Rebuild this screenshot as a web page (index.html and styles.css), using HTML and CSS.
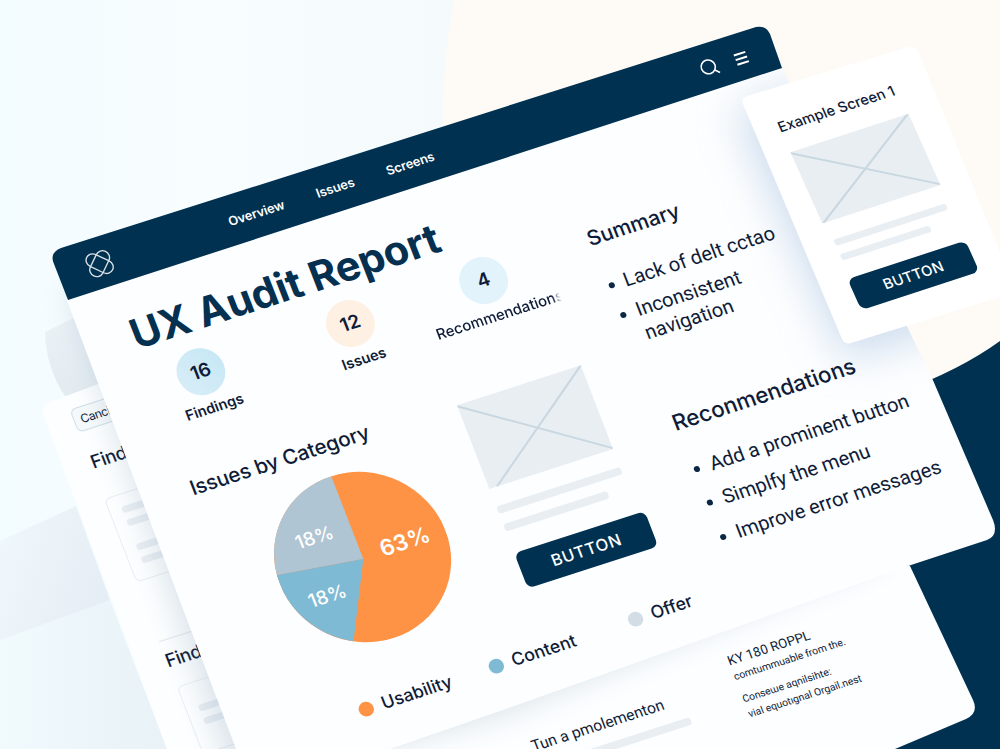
FILE: index.html
```html
<!DOCTYPE html>
<html lang="en">
<head>
  <meta charset="UTF-8" />
  <title>UX Audit Report</title>
  <link rel="stylesheet" href="styles.css">
</head>
<body>
  <div class="stage">

    <!-- backdrop and back sheet -->
    <svg class="layer" viewBox="0 0 1000 749">
      <defs>
        <linearGradient id="sky" x1="0" y1="0" x2="1" y2="0">
          <stop offset="0" stop-color="#f3fcff" />
          <stop offset=".2" stop-color="#f8fdff" />
          <stop offset=".5" stop-color="#f4f9fc" />
        </linearGradient>
        <linearGradient id="shade" x1="0" y1="0" x2="1" y2="0.4">
          <stop offset="0" stop-color="#eff8fb" />
          <stop offset="1" stop-color="#e6eef5" />
        </linearGradient>
        <linearGradient id="shade2" x1="0" y1="0" x2="1" y2="0">
          <stop offset="0" stop-color="#f1fafd" />
          <stop offset="1" stop-color="#e8f2f7" />
        </linearGradient>
        <linearGradient id="disc" x1="0" y1="0" x2="0" y2="1">
          <stop offset="0" stop-color="#edf3f7" />
          <stop offset="1" stop-color="#e2ebf0" />
        </linearGradient>
        <filter id="soft" x="-20%" y="-20%" width="140%" height="140%">
          <feGaussianBlur stdDeviation="14" />
        </filter>
        <filter id="wide" x="-30%" y="-30%" width="160%" height="160%">
          <feGaussianBlur stdDeviation="22" />
        </filter>
        <clipPath id="panel">
          <path d="M66 298 L781 66 L932 378 L993 520 L987 540 L908 566 L500 711 L236 749 Z" />
        </clipPath>
      </defs>
      <rect width="1000" height="749" fill="url(#sky)" />
      <path d="M454 0 Q441 70 443 130 L900 420 L1000 400 V0 Z" fill="#fefaf5" />
      <path d="M45 332 L90 310 L120 385 L65 396 Q46 368 45 332 Z" fill="url(#disc)" />
      <path d="M0 541 L76 506 L110 600 L0 648 Z" fill="url(#shade)" />
      <path d="M0 640 L110 600 L167 749 H0 Z" fill="url(#shade2)" />
      <path d="M900 392 Q960 370 1000 341 V749 H850 Z" fill="#003150" />
      <path d="M53 401 L400 270 L910 566 L973 700 Q979 713 966 719 L895 749 H167 L43 414 Q40 406 53 401 Z" fill="#fcfeff" />
    </svg>

    <div class="sheet back">
      <div class="chip">Canci</div>
      <h3>Find</h3>
      <div class="box">
        <i></i><i></i><i class="apart"></i><i></i>
      </div>
      <hr>
      <h3>Find</h3>
      <div class="box short"><i></i><i></i></div>
    </div>

    <div class="sheet footnotes">
      <div class="promo">
        <p>Tun a pmolementon</p>
        <i></i>
      </div>
      <div class="notes">
        <h4>KY 180 ROPPL</h4>
        <p>comtummuable from the.</p>
        <p class="next">Conseɯe aqnilsihte:</p>
        <p>vial equotıgnal Orgail.nest</p>
      </div>
    </div>

    <!-- report sheet, with the shadow of the example card on it -->
    <svg class="layer" viewBox="0 0 1000 749">
      <path d="M66 290 L760 62 L880 560 L500 716 L236 790 Z" fill="#5b7f9c" opacity=".2" filter="url(#soft)" />
      <path d="M66 298 L781 66 L932 378 L993 520 Q999 535 987 540 L908 566 L500 711 L390 749 H236 L192 633 Z" fill="#fdfeff" />
      <g clip-path="url(#panel)">
        <path d="M735 110 L900 60 L1000 310 L845 360 Z" fill="#9dbbdc" opacity=".5" filter="url(#wide)" />
      </g>
      <path d="M68 300 L54 264 Q49 253 61 248 L756 27 Q766 25 770 34 L782 68 Z" fill="#003150" />
    </svg>

    <div class="sheet report">
      <header>
        <svg class="logo" viewBox="-14 -14 28 28">
          <rect x="-14.5" y="-7" width="29" height="14" rx="7" transform="rotate(45)" />
          <rect x="-14.5" y="-7" width="29" height="14" rx="7" transform="rotate(-45)" />
        </svg>
        <nav>
          <a>Overview</a>
          <a>Issues</a>
          <a>Screens</a>
        </nav>
        <svg class="search" viewBox="0 0 20 20"><circle cx="9" cy="9" r="7" /><path d="M14 14 L18 18" /></svg>
        <svg class="menu" viewBox="0 0 14 14"><path d="M1 2 H13 M1 7 H13 M1 12 H13" /></svg>
      </header>

      <div class="content">
        <main>
          <h1>UX Audit Report</h1>
          <div class="stats">
            <div class="stat"><b>16</b><span>Findings</span></div>
            <div class="stat warm"><b>12</b><span>Issues</span></div>
            <div class="stat pale"><b>4</b><span>Recommendations</span></div>
          </div>

          <div class="row">
            <section class="category">
              <h2>Issues by Category</h2>
              <svg class="pie" viewBox="-87 -87 174 174">
                <circle r="87" fill="#ff9345" />
                <path d="M0 2 L0 -87 A87 87 0 0 0 -86.5 -9 Z" fill="#afc5d3" />
                <path d="M0 2 L-86.5 -9 A87 87 0 0 0 -38.9 77.8 Z" fill="#7fbad5" />
                <text class="large" x="45" y="6">63%</text>
                <text x="-38" y="-27">18%</text>
                <text x="-47" y="33">18%</text>
              </svg>
            </section>
            <section class="wireframe">
              <svg class="image" viewBox="0 0 130 90"><path d="M0 1 L130 89 M130 0 L8 90" /></svg>
              <i></i>
              <i class="short"></i>
              <button>BUTTON</button>
            </section>
          </div>

          <div class="legend">
            <span class="usability">Usability</span>
            <span class="issue-content">Content</span>
            <span class="offer">Offer</span>
          </div>
        </main>

        <aside>
          <h2>Summary</h2>
          <ul>
            <li>Lack of delt cctao</li>
            <li>Inconsistent<br>navigation</li>
          </ul>
          <div class="recommendations">
            <h2>Reconmendations</h2>
            <ul>
              <li>Add a prominent button</li>
              <li>Simplfy the menu</li>
              <li>Improve error messages</li>
            </ul>
          </div>
        </aside>
      </div>
    </div>

    <!-- example card -->
    <svg class="layer" viewBox="0 0 1000 749">
      <path d="M747 96 L908 47 Q916 45 919 53 L1016 292 L851 343 Q845 345 842 339 L743 104 Q741 98 747 96 Z" fill="#fff" />
    </svg>
    <div class="sheet example">
      <h3>Example Screen 1</h3>
      <div class="wireframe">
        <svg class="image" viewBox="0 0 124 78"><path d="M0 1 L124 77 M123 0 L1 78" /></svg>
        <i></i>
        <i class="short"></i>
        <button>BUTTON</button>
      </div>
    </div>

  </div>
</body>
</html>
```
FILE: styles.css
```css
* { box-sizing: border-box; }
body { margin: 0; font-family: Inter, "Liberation Sans", sans-serif; color: #0f1c38; }
h1, h2, h3, h4, p, ul { margin: 0; padding: 0; }
i { display: block; background: #e9eef3; border-radius: 3px; }

.stage { position: relative; width: 1000px; height: 749px; overflow: hidden; }
.layer { position: absolute; left: 0; top: 0; width: 1000px; height: 749px; }

/* every sheet is flat inside and tilted as a whole */
.sheet {
  position: absolute;
  transform-origin: 0 0;
  transform: matrix(.952, -.307, .36, .93, 0, 0);
}

/* back sheet */
.back { left: 42px; top: 408px; width: 200px; padding: 10px 0 0 25px; }
.chip {
  height: 25px;
  padding-left: 6px;
  border: 1px solid #cfdfe8;
  border-radius: 6px;
  background: #f5f9fb;
  font: 12px/23px Inter, sans-serif;
  letter-spacing: -.4px;
}
.back h3 { margin: 20px 0 0 1px; font-size: 18.5px; line-height: 24px; font-weight: 500; letter-spacing: -.4px; }
.box {
  height: 90px;
  margin-top: 27px;
  padding: 12px 0 0 12px;
  border: 1px solid #e9eef2;
  border-radius: 6px;
}
.box i { height: 7px; margin-bottom: 7px; }
.box .apart { margin-top: 19px; }
.box.short { height: 73px; margin-top: 16px; padding-top: 23px; }
.back hr { height: 1px; margin: 63px 0 0; border: 0; background: #e2e8ed; }
.back hr + h3 { margin: 8px 0 0 -1px; }

.footnotes { left: 42px; top: 408px; display: flex; padding: 445px 0 0 335px; }
.promo { width: 214px; padding-top: 20px; font: 15.6px/20px Roboto, sans-serif; }
.promo i { width: 158px; height: 8px; margin-top: 10px; }
.notes { font: 10.3px/16px Roboto, sans-serif; white-space: nowrap; }
.notes h4 { font-size: 13.2px; line-height: 18px; font-weight: 400; }
.notes .next { margin-top: 8px; }

/* report */
.report { left: 50px; top: 253px; width: 753px; }
header { display: flex; align-items: center; height: 51px; padding-left: 29px; }
header svg { fill: none; stroke: #fff; }
.logo { width: 27px; height: 27px; stroke-width: 1.4; opacity: .85; }
nav { display: flex; gap: 34px; margin-left: 122px; }
nav a { color: #fff; font-size: 12.8px; font-weight: 600; letter-spacing: -.1px; }
.search { width: 20px; height: 20px; margin-left: auto; stroke-width: 1.6; }
.menu { width: 14px; height: 14px; margin: 2px 30px 0 16px; stroke-width: 2; }

.content { display: flex; }
main { flex: none; width: 507px; }
h1 {
  margin: 28px 0 0 46px;
  color: #06304f;
  font-size: 41.3px;
  line-height: 50px;
  font-weight: 700;
  letter-spacing: -.15px;
  white-space: nowrap;
}
h2 { font-size: 22.2px; line-height: 26px; font-weight: 500; white-space: nowrap; }

.stats {
  display: grid;
  grid-template-columns: 140px 174px 106px;
  margin: 7px 0 0 28px;
}
.stat { display: flex; flex-direction: column; align-items: center; }
.stat b {
  width: 48px;
  border-radius: 50%;
  background: linear-gradient(60deg, #d9eef7, #c5e7f5);
  font-size: 19px;
  line-height: 48px;
  font-weight: 600;
  text-align: center;
}
.stat span { margin-top: 4px; font-size: 14.5px; line-height: 20px; font-weight: 600; }
.warm b { background: #fef0e2; }
.pale b { background: #e2f3fc; }
.pale span {
  margin-left: 5px;
  font-weight: 500;
  font-size: 14.9px;
  -webkit-mask-image: linear-gradient(90deg, #000 91%, transparent 98%);
  mask-image: linear-gradient(90deg, #000 91%, transparent 98%);
}

.row { display: flex; padding-left: 46px; margin-top: 48px; }
.category { width: 279px; }
.category h2 { font-size: 20.6px; letter-spacing: -.15px; }
.pie { display: block; width: 174px; height: 174px; margin: 18px 0 0 49px; }
.pie text { fill: #fff; font-size: 19px; font-weight: 500; text-anchor: middle; }
.pie .large { font-size: 22.5px; font-weight: 600; }

.wireframe { width: 130px; padding-top: 15px; }
.image { display: block; width: 130px; height: 90px; background: #e9eef3; }
.image path { fill: none; stroke: #c8d7e0; stroke-width: 2; }
.wireframe i { height: 8px; margin-top: 19px; }
.wireframe i.short { width: 109px; margin-top: 11px; }
button {
  width: 137px;
  height: 38px;
  margin-top: 23px;
  padding: 0;
  border: 0;
  border-radius: 7px;
  background: #003150;
  color: #fff;
  font: 500 16.4px Inter, sans-serif;
  letter-spacing: .7px;
}

.legend { display: flex; margin: 48px 0 0 123px; font-size: 17.6px; line-height: 22px; font-weight: 500; }
.legend span { display: flex; flex: none; align-items: center; gap: 9px; width: 147px; }
.legend span::before { content: ""; width: 15px; height: 15px; border-radius: 50%; background: #ff9345; }
.legend .issue-content::before { background: #7fbad5; }
.legend .offer::before { background: #d2dde5; }
.legend .usability { width: 137px; }
.legend .issue-content { margin-top: -2px; }
.legend .offer { margin-top: -6px; }

aside { padding-top: 89px; }
aside > h2 { font-size: 21px; }
ul { margin-top: 25px; list-style: none; font: 20px/25.5px Roboto, sans-serif; white-space: nowrap; }
li { position: relative; padding-left: 19px; margin-bottom: 6px; letter-spacing: -.05px; }
li + li { padding-left: 20px; }
li::before {
  content: "";
  position: absolute;
  left: 3px;
  top: 10px;
  width: 6px;
  height: 6px;
  border-radius: 50%;
  background: #0a2744;
}
.recommendations { padding: 62px 0 0 13px; }
.recommendations li { margin-bottom: 11px; padding-left: 20px; letter-spacing: -.08px; }

/* example card */
.example {
  left: 742px;
  top: 98px;
  width: 168px;
  padding: 28px 0 0 21px;
  transform: matrix(.952, -.31, .41, .912, 0, 0);
}
.example h3 { font-size: 14.5px; line-height: 24px; font-weight: 500; white-space: nowrap; }
.example .wireframe { width: 124px; margin-left: 1px; padding-top: 15px; }
.example .image { width: 124px; height: 78px; }
.example i { width: 118px; height: 7px; margin: 19px 0 0 3px; }
.example i.short { width: 94px; margin-top: 9px; }
.example button { width: 124px; height: 34px; margin-top: 19px; font-size: 14.6px; letter-spacing: .2px; }
```
